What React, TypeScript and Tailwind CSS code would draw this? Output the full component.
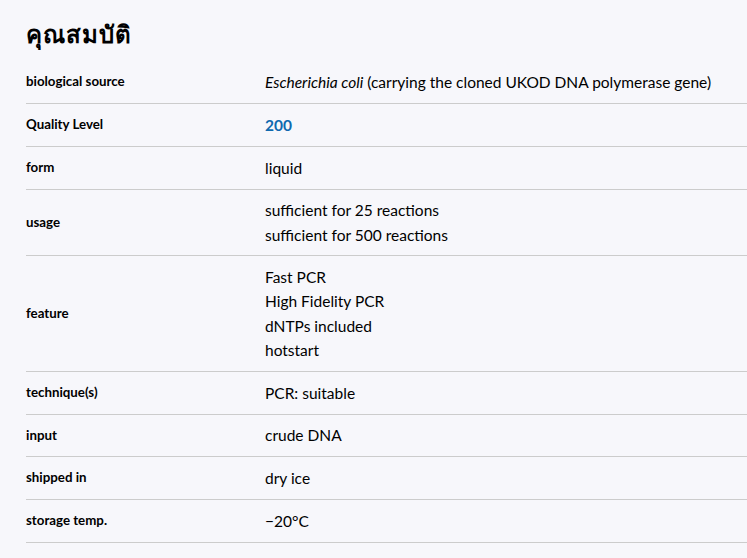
const rows: { label: string; values: React.ReactNode[] }[] = [
  {
    label: "biological source",
    values: [
      <>
        <i>Escherichia coli</i> (carrying the cloned UKOD DNA polymerase gene)
      </>,
    ],
  },
  { label: "Quality Level", values: [<span className="font-bold text-[#0f69af]">200</span>] },
  { label: "form", values: ["liquid"] },
  { label: "usage", values: ["sufficient for 25 reactions", "sufficient for 500 reactions"] },
  { label: "feature", values: ["Fast PCR", "High Fidelity PCR", "dNTPs included", "hotstart"] },
  { label: "technique(s)", values: ["PCR: suitable"] },
  { label: "input", values: ["crude DNA"] },
  { label: "shipped in", values: ["dry ice"] },
  { label: "storage temp.", values: ["−20°C"] },
];

export default function App() {
  return (
    <div className="min-h-[558px] bg-[#f7f7fb] pl-[26px] pt-[19px] text-black font-['Lato','Noto_Sans',sans-serif]">
      <h2 className="text-[24px] font-bold leading-[30px] tracking-[1px] mb-[12.5px]">คุณสมบัติ</h2>
      <div className="w-[750px]">
        {rows.map((row) => (
          <div key={row.label} className="flex items-center border-b border-[#cccccc] py-[8.7px]">
            <div className="w-[239px] shrink-0 text-[13.3px] font-bold">{row.label}</div>
            <div className="flex flex-col text-[15.5px] leading-[24.3px]">
              {row.values.map((v, i) => (
                <div key={i}>{v}</div>
              ))}
            </div>
          </div>
        ))}
      </div>
    </div>
  );
}
